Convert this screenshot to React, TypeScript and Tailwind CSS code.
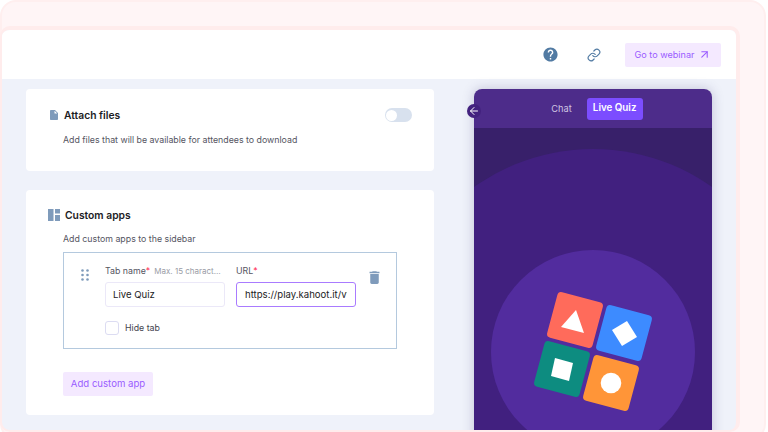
import { ArrowLeft, ArrowUpRight, Link } from "lucide-react";
import { MdDelete, MdHelp, MdInsertDriveFile } from "react-icons/md";

function LayoutIcon() {
  return (
    <svg width="12" height="12" viewBox="0 0 12 12" className="fill-[#7f9bbb]">
      <rect x="0" y="0" width="5.5" height="12" />
      <rect x="7" y="0" width="5" height="4.5" />
      <rect x="7" y="6" width="5" height="6" />
    </svg>
  );
}

function GripIcon() {
  return (
    <svg width="8" height="12" viewBox="0 0 8 12" className="fill-[#7f9bbb]">
      <circle cx="1.5" cy="1.5" r="1.3" />
      <circle cx="6.5" cy="1.5" r="1.3" />
      <circle cx="1.5" cy="6" r="1.3" />
      <circle cx="6.5" cy="6" r="1.3" />
      <circle cx="1.5" cy="10.5" r="1.3" />
      <circle cx="6.5" cy="10.5" r="1.3" />
    </svg>
  );
}

function KahootLogo() {
  return (
    <svg width="120" height="120" viewBox="533 292 120 120" className="absolute left-[59px] top-[203px]">
      <rect x="551.5" y="296.5" width="47" height="47" rx="4" fill="#ff6b5b" transform="rotate(15 575 320)" />
      <rect x="600.5" y="309.5" width="47" height="47" rx="4" fill="#3d8bff" transform="rotate(15 624 333)" />
      <rect x="538.5" y="345.5" width="47" height="47" rx="4" fill="#0d8c80" transform="rotate(15 562 369)" />
      <rect x="587.5" y="359.5" width="47" height="47" rx="4" fill="#ff9538" transform="rotate(15 611 383)" />
      <polygon points="576,310 561,327 584,333" fill="#fff" />
      <polygon points="627,321 612,330 622,346 637,337" fill="#fff" />
      <polygon points="555,358 573,363 569,381 551,376" fill="#fff" />
      <circle cx="611" cy="383" r="10.3" fill="#fff" />
    </svg>
  );
}

function PhonePreview() {
  return (
    <div className="relative w-[238px] h-[360px] shrink-0 rounded-t-[8px] shadow-[0_0_12px_rgba(60,50,110,0.25)]">
      <div className="flex h-[39px] items-center justify-center gap-[15px] rounded-t-[8px] bg-[#4d2c8a] pl-[8px]">
        <span className="text-[9.2px] text-[#cfc6e2]">Chat</span>
        <span className="flex h-[22px] w-[56px] items-center justify-center rounded-[3px] bg-[#7c4dff] text-[9.8px] font-semibold text-white">Live Quiz</span>
      </div>
      <div className="relative h-[321px] overflow-hidden bg-[#38206a]">
        <div className="absolute left-[-86px] top-[21px] h-[410px] w-[410px] rounded-full bg-[#41207f]" />
        <div className="absolute left-[17px] top-[122px] h-[204px] w-[204px] rounded-full bg-[#522c9e]" />
      </div>
      <KahootLogo />
      <div className="absolute left-[-7px] top-[15px] flex h-[14px] w-[14px] items-center justify-center rounded-full bg-[#43227f]">
        <ArrowLeft size={12} className="text-white" strokeWidth={2} />
      </div>
    </div>
  );
}

export default function App() {
  return (
    <div
      className="h-[432px] w-[768px] overflow-hidden bg-white text-[#1c1c24]"
      style={{ fontFamily: "Inter, sans-serif" }}
    >
      <div className="h-[440px] w-[766px] rounded-[16px] border-2 border-[#ffefef] bg-[#fff5f6] pt-[24px]">
        <div className="-ml-[2px] flex h-[406px] w-[740px] flex-col overflow-hidden rounded-[10px] border-2 border-t-4 border-r-4 border-[#ffecec] bg-[#eff2fa]">
          <div className="flex h-[49px] shrink-0 items-center justify-end bg-white pr-[15px]">
            <MdHelp size={17} className="mr-[28px] text-[#527ba3]" />
            <Link size={14} strokeWidth={2} className="mr-[24px] text-[#527ba3]" />
            <div className="flex h-[24px] w-[96px] items-center justify-center gap-[4px] rounded-[2px] bg-[#f4e9ff] text-[9.1px] text-[#9a5cff]">
              Go to webinar
              <ArrowUpRight size={13} strokeWidth={2} />
            </div>
          </div>
          <div className="flex items-start gap-[40px] pl-[24px] pt-[10px]">
            <div className="flex w-[408px] shrink-0 flex-col gap-[19px]">
              <div className="h-[82px] rounded-[4px] bg-white pt-[19px]">
                <div className="flex h-[14px] items-center pl-[22px] pr-[22px]">
                  <span className="flex w-[13px] justify-start">
                    <MdInsertDriveFile size={12} className="text-[#7f9bbb]" />
                  </span>
                  <span className="ml-[3px] pt-[2px] text-[10.3px] font-semibold">Attach files</span>
                  <div className="ml-auto flex h-[14px] w-[27px] items-center rounded-full bg-[#d8e1ee] pl-[1px]">
                    <div className="h-[11px] w-[11px] rounded-full bg-white" />
                  </div>
                </div>
                <p className="mt-[11px] pl-[37px] text-[8.8px] leading-[14px] text-[#55555f]">
                  Add files that will be available for attendees to download
                </p>
              </div>

              <div className="h-[225px] rounded-[4px] bg-white pt-[18px]">
                <div className="flex h-[14px] items-center pl-[22px]">
                  <span className="flex w-[13px]">
                    <LayoutIcon />
                  </span>
                  <span className="ml-[4px] pt-[2px] text-[10.3px] font-semibold">Custom apps</span>
                </div>
                <p className="mt-[10px] pl-[37px] text-[8.8px] leading-[14px] text-[#55555f]">Add custom apps to the sidebar</p>
                <div className="ml-[37px] mt-[6px] flex h-[97px] w-[334px] border border-[#b4c9de] pl-[17px] pt-[12px]">
                  <span className="w-[24px] shrink-0 pt-[4px]">
                    <GripIcon />
                  </span>
                  <div className="flex flex-col">
                    <div className="flex gap-[11px]">
                      <div className="w-[120px]">
                        <div className="flex h-[12px] items-center whitespace-nowrap text-[8.8px] text-[#55555f]">
                          Tab name<span className="text-[#ff1f4f]">*</span>
                          <span className="ml-[4px] w-[70px] truncate text-[8px] text-[#9a9ca6]">Max. 15 characters</span>
                        </div>
                        <input
                          readOnly
                          value="Live Quiz"
                          className="mt-[5px] h-[25px] w-[120px] rounded-[3px] border border-[#ebe8f8] px-[7px] text-[9.6px] outline-none"
                        />
                      </div>
                      <div className="w-[120px]">
                        <div className="flex h-[12px] items-center text-[8.8px] text-[#55555f]">
                          URL<span className="text-[#ff1f4f]">*</span>
                        </div>
                        <input
                          readOnly
                          value="https://play.kahoot.it/v1/"
                          className="mt-[5px] h-[25px] w-[120px] rounded-[3px] border border-[#a97bff] px-[8px] text-[9.6px] outline-none"
                        />
                      </div>
                    </div>
                    <div className="mt-[14px] flex items-center gap-[6px]">
                      <div className="h-[14px] w-[14px] rounded-[3px] border border-[#dcdcf2]" />
                      <span className="text-[8.8px] text-[#44444e]">Hide tab</span>
                    </div>
                  </div>
                  <MdDelete size={17} className="ml-[10px] mt-[4px] text-[#7f9bbb]" />
                </div>
                <div className="ml-[37px] mt-[23px] flex h-[24px] w-[90px] items-center justify-center rounded-[2px] bg-[#f4e9ff] text-[9.6px] text-[#9a5cff]">
                  Add custom app
                </div>
              </div>
            </div>
            <PhonePreview />
          </div>
        </div>
      </div>
    </div>
  );
}
